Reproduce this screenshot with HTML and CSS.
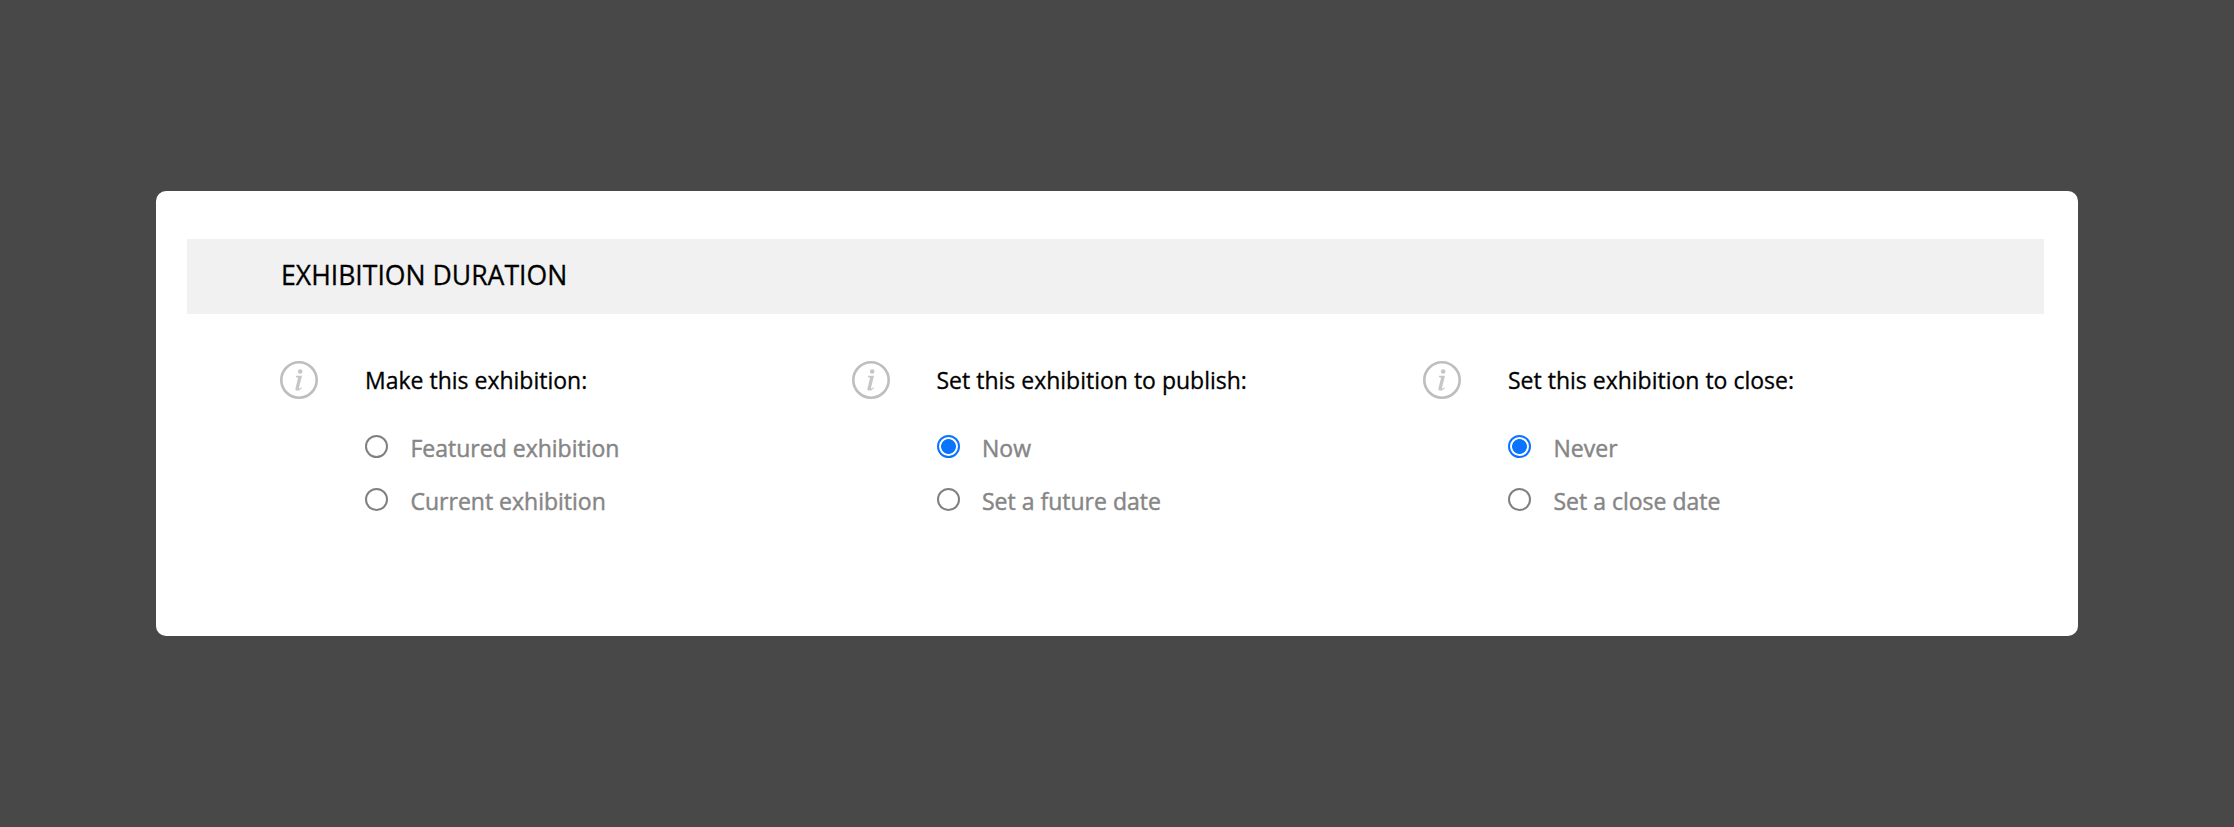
FILE: index.html
```html
<!DOCTYPE html>
<html lang="en">
<head>
<meta charset="utf-8">
<title>Exhibition duration</title>
<link rel="stylesheet" href="styles.css">
</head>
<body>
<main class="card">
  <h2 class="bar">EXHIBITION DURATION</h2>
  <div class="cols">
    <section class="col">
      <svg class="info" viewBox="0 0 38 38"><circle cx="19" cy="19" r="17.7"/><path class="i" d="M20.2 8.200a2.300 2.300 0 1 1-.01 0ZM16 14.800h6l-3 12c-.2.8.4 1 1.600.2l1-.7.4.6c-1.600 1.600-3 2.700-4.800 2.700-1.400 0-2.100-.8-1.700-2.300l2.400-9.800c.2-.9-.4-1.200-1.900-1.300Z"/></svg>
      <div class="body">
        <p class="label">Make this exhibition:</p>
        <label class="opt"><input type="radio" name="a"><span>Featured exhibition</span></label>
        <label class="opt"><input type="radio" name="a"><span>Current exhibition</span></label>
      </div>
    </section>
    <section class="col">
      <svg class="info" viewBox="0 0 38 38"><circle cx="19" cy="19" r="17.7"/><path class="i" d="M20.2 8.200a2.300 2.300 0 1 1-.01 0ZM16 14.800h6l-3 12c-.2.8.4 1 1.600.2l1-.7.4.6c-1.600 1.600-3 2.700-4.800 2.700-1.400 0-2.100-.8-1.700-2.300l2.400-9.800c.2-.9-.4-1.200-1.900-1.300Z"/></svg>
      <div class="body">
        <p class="label">Set this exhibition to publish:</p>
        <label class="opt"><input type="radio" name="b" checked><span>Now</span></label>
        <label class="opt"><input type="radio" name="b"><span>Set a future date</span></label>
      </div>
    </section>
    <section class="col">
      <svg class="info" viewBox="0 0 38 38"><circle cx="19" cy="19" r="17.7"/><path class="i" d="M20.2 8.200a2.300 2.300 0 1 1-.01 0ZM16 14.800h6l-3 12c-.2.8.4 1 1.600.2l1-.7.4.6c-1.600 1.600-3 2.700-4.800 2.700-1.400 0-2.100-.8-1.700-2.300l2.400-9.800c.2-.9-.4-1.200-1.900-1.300Z"/></svg>
      <div class="body">
        <p class="label">Set this exhibition to close:</p>
        <label class="opt"><input type="radio" name="c" checked><span>Never</span></label>
        <label class="opt"><input type="radio" name="c"><span>Set a close date</span></label>
      </div>
    </section>
  </div>
</main>
</body>
</html>
```
FILE: styles.css
```css
* { box-sizing: border-box; }
html, body { height: 100%; }
body {
  margin: 0;
  background: #484848;
  padding: 191px 0 0 156px;
  font-family: "Open Sans", sans-serif;
  overflow: hidden;
}
.card {
  width: 1922px;
  height: 445px;
  background: #fff;
  border-radius: 10px;
  padding: 48px 34px 0 31px;
}
.bar {
  margin: 0;
  height: 75px;
  padding-left: 94px;
  background: #f1f1f1;
  color: #000;
  font-size: 26.6px;
  font-weight: 400;
  line-height: 73px;
  -webkit-text-stroke: 0.3px #000;
}
.cols {
  display: grid;
  grid-template-columns: repeat(3, 571.5px);
  padding: 47px 0 0 94px;
}
.col { display: flex; gap: 47px; }
.info { width: 38px; height: 38px; flex: none; margin-left: -1px; }
.info circle { fill: none; stroke: #bebebe; stroke-width: 2.6; }
.info .i { fill: #c6c6c6; }
.label {
  margin: 0 0 22px;
  color: #000;
  font-size: 23px;
  line-height: 38px;
  -webkit-text-stroke: 0.3px #000;
}
.opt {
  display: flex;
  align-items: center;
  height: 53px;
  color: #868686;
  font-size: 23px;
  font-weight: 400;
  -webkit-text-stroke: 0.45px #868686;
}
.opt input {
  appearance: none;
  width: 23px;
  height: 23px;
  margin: 0 22.5px 0 0;
  border: 2px solid #808080;
  border-radius: 50%;
  background: #fff;
  position: relative;
  top: -1px;
}
.opt input:checked {
  border-color: #0a74ff;
  background: radial-gradient(circle, #0a74ff 0 7px, #fff 7.8px);
}
```
